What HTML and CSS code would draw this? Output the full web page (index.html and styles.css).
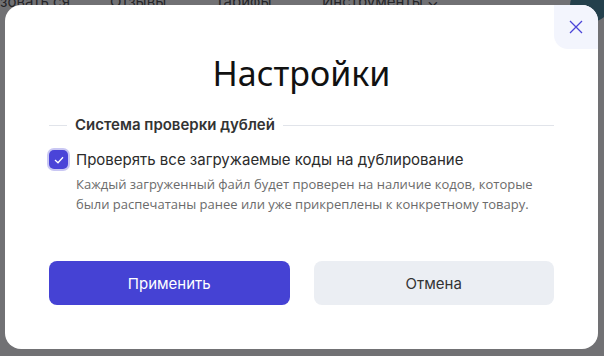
FILE: index.html
```html
<!DOCTYPE html>
<html lang="ru">
<head>
    <meta charset="UTF-8">
    <meta name="viewport" content="width=device-width, initial-scale=1.0">
    <title>Настройки</title>
    <link rel="stylesheet" href="styles.css">
</head>
<body>
    <div class="page">
        <nav class="topnav">
            <span>зовать ся</span>
            <span>Отзывы</span>
            <span>Тарифы</span>
            <span>Инструменты ⌄</span>
        </nav>
        <div class="avatar"></div>
    </div>

    <div class="overlay">
        <div class="modal">
            <button class="close" aria-label="Закрыть">
                <svg width="14" height="14" viewBox="0 0 14 14">
                    <path d="M1 1 L13 13 M13 1 L1 13" stroke="#4a44d8" stroke-width="1.3" fill="none"/>
                </svg>
            </button>

            <h1 class="title">Настройки</h1>

            <div class="section">
                <div class="section-head">
                    <span class="line short"></span>
                    <span class="section-title">Система проверки дублей</span>
                    <span class="line"></span>
                </div>

                <label class="option">
                    <span class="checkbox">
                        <svg width="10" height="8" viewBox="0 0 10 8">
                            <path d="M1 4 L4 6.8 L9 1.2" stroke="#fff" stroke-width="1.3" fill="none"/>
                        </svg>
                    </span>
                    <span class="option-text">
                        <span class="option-label">Проверять все загружаемые коды на дублирование</span>
                        <span class="option-hint">Каждый загруженный файл будет проверен на наличие кодов, которые были распечатаны ранее или уже прикреплены к конкретному товару.</span>
                    </span>
                </label>
            </div>

            <div class="actions">
                <button class="btn btn-primary">Применить</button>
                <button class="btn btn-secondary">Отмена</button>
            </div>
        </div>
    </div>
</body>
</html>
```

FILE: styles.css
```css
body {
    margin: 0;
    font-family: Inter, "Noto Sans", sans-serif;
    background-color: #ffffff;
    overflow: hidden;
}
.page {
    height: 356px;
}
.topnav {
    display: flex;
    margin-top: -8px;
    font-size: 15px;
    color: #222;
}
.topnav span:nth-child(1) { width: 110px; }
.topnav span:nth-child(2) { width: 105px; }
.topnav span:nth-child(3) { width: 107px; }
.avatar {
    position: absolute;
    top: -12px;
    right: -6px;
    width: 40px;
    height: 34px;
    border-radius: 50%;
    background-color: #1f6f8b;
}
.overlay {
    position: fixed;
    inset: 0;
    background-color: rgba(40, 40, 44, 0.66);
    display: flex;
    align-items: flex-start;
    justify-content: flex-start;
    padding: 5px 0 0 5px;
}
.modal {
    position: relative;
    width: 593px;
    height: 344px;
    background-color: #ffffff;
    border-radius: 16px;
    box-sizing: border-box;
    padding: 46px 44px 0 44px;
}
.close {
    position: absolute;
    top: 0;
    right: 0;
    width: 44px;
    height: 44px;
    border: none;
    padding: 0;
    background-color: #f3f5fd;
    border-radius: 0 16px 0 14px;
    display: flex;
    align-items: center;
    justify-content: center;
    cursor: pointer;
}
.title {
    margin: 0;
    text-align: center;
    font-family: "Noto Sans", sans-serif;
    font-weight: 400;
    font-size: 34px;
    line-height: 44px;
    color: #111;
}
.section {
    margin-top: 20px;
}
.section-head {
    display: flex;
    align-items: center;
    gap: 8px;
}
.line {
    flex: 1;
    height: 1px;
    background-color: #e1e4ea;
}
.line.short {
    flex: 0 0 18px;
}
.section-title {
    font-size: 15px;
    font-weight: 600;
    color: #333;
    line-height: 20px;
}
.option {
    display: flex;
    gap: 8px;
    margin-top: 14px;
    cursor: pointer;
}
.checkbox {
    flex: 0 0 auto;
    width: 19px;
    height: 19px;
    margin-top: 1px;
    border-radius: 5px;
    background-color: #4a44d8;
    box-shadow: 0 0 0 2px #c9c7f3;
    display: flex;
    align-items: center;
    justify-content: center;
}
.option-text {
    display: flex;
    flex-direction: column;
}
.option-label {
    font-size: 15px;
    line-height: 21px;
    color: #2b2b2b;
}
.option-hint {
    margin-top: 4px;
    font-family: "Open Sans", sans-serif;
    font-size: 13px;
    line-height: 20px;
    color: #6b6b6b;
    max-width: 470px;
}
.actions {
    display: flex;
    gap: 24px;
    margin-top: 47px;
}
.btn {
    flex: 1;
    height: 44px;
    border: none;
    border-radius: 8px;
    font-family: Inter, "Noto Sans", sans-serif;
    font-size: 15px;
    cursor: pointer;
}
.btn-primary {
    background-color: #4542d4;
    color: #ffffff;
}
.btn-secondary {
    background-color: #ebeef3;
    color: #333;
}
```
